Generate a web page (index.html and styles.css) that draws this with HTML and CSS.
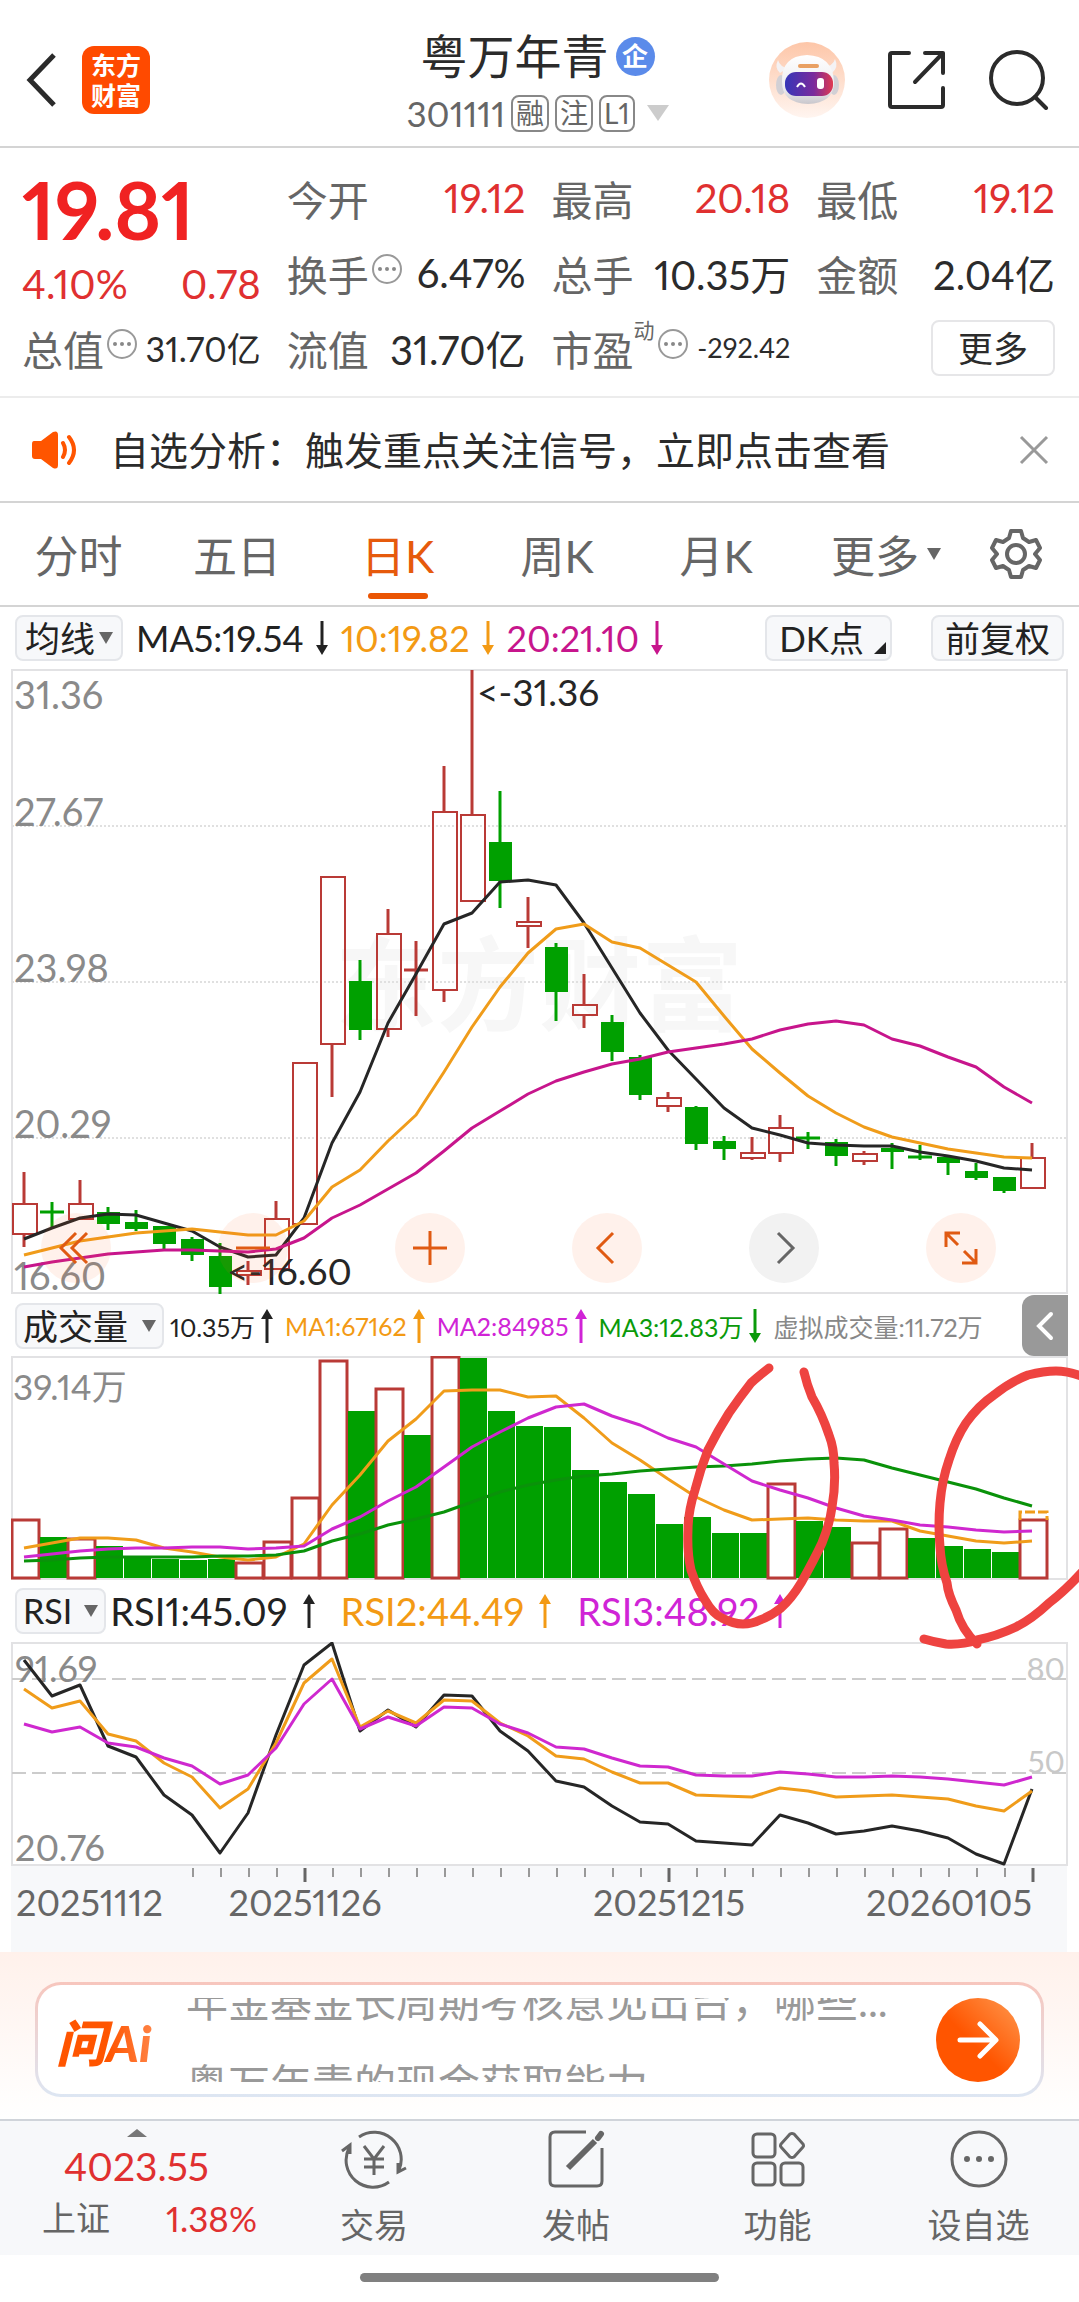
FILE: index.html
```html
<!DOCTYPE html>
<html lang="zh-CN">
<head>
    <meta charset="UTF-8">
    <meta name="viewport" content="width=device-width, initial-scale=1.0">
    <title>粤万年青 301111</title>
    <link rel="stylesheet" href="styles.css">
</head>
<body>

<header class="header">
    <div class="header-left">
        <button class="icon-btn" aria-label="返回">
            <svg width="32" height="56" viewBox="0 0 32 56"><path d="M28 3 L4 28 L28 53" fill="none" stroke="#2b2b2b" stroke-width="5"/></svg>
        </button>
        <a class="logo" href="#">东方<br>财富</a>
    </div>
    <div class="title">
        <h1>粤万年青<span class="badge">企</span></h1>
        <div class="code">
            <span>301111</span><span class="tag">融</span><span class="tag">注</span><span class="tag">L1</span>
            <svg width="22" height="16" viewBox="0 0 22 16"><path d="M0 0 H22 L11 16Z" fill="#ccc"/></svg>
        </div>
    </div>
    <div class="header-right">
        <button class="icon-btn" aria-label="助手">
            <svg width="76" height="76" viewBox="0 0 76 76">
                <defs>
                    <linearGradient id="halo" x1="0" y1="0" x2="0" y2="1"><stop offset="0" stop-color="#fdc6a8"/><stop offset="1" stop-color="#fff5f0"/></linearGradient>
                    <linearGradient id="face" x1="0" y1="0" x2="1" y2="0"><stop offset="0" stop-color="#3636b8"/><stop offset="0.6" stop-color="#7a2a9c"/><stop offset="1" stop-color="#e03a50"/></linearGradient>
                    <linearGradient id="shell" x1="0" y1="0" x2="0" y2="1"><stop offset="0" stop-color="#fff"/><stop offset="0.7" stop-color="#ecebee"/><stop offset="1" stop-color="#c9c7cc"/></linearGradient>
                </defs>
                <circle cx="38" cy="38" r="38" fill="url(#halo)"/>
                <path d="M9 18 q-4 8 2 13 l8 -5 q-8 -1 -10 -8z M66 17 q4 8 -3 14 l-8 -6 q9 -1 11 -8z" fill="#f4f2f4"/>
                <ellipse cx="12" cy="43" rx="5" ry="10" fill="#d2d0d5"/>
                <ellipse cx="65" cy="43" rx="5" ry="10" fill="#d2d0d5"/>
                <path d="M13 40 Q12 14 38 13 Q64 14 65 40 Q65 61 39 62 Q13 61 13 40Z" fill="url(#shell)"/>
                <rect x="29" y="22" width="21" height="4" rx="2" fill="#e9a063"/>
                <rect x="16" y="30" width="48" height="24" rx="11" fill="url(#face)"/>
                <path d="M28 45 q4 -7 8 0" fill="none" stroke="#fff" stroke-width="2"/>
                <rect x="48" y="36" width="7" height="11" rx="3" fill="#fff"/>
            </svg>
        </button>
        <button class="icon-btn" aria-label="分享">
            <svg width="60" height="60" viewBox="0 0 60 60"><path d="M22 3 H5 Q3 3 3 5 V55 Q3 57 5 57 H54 Q56 57 56 55 V38 M38 3 H56 V23 M56 3 L28 32" fill="none" stroke="#2b2b2b" stroke-width="4" stroke-linecap="round" stroke-linejoin="round"/></svg>
        </button>
        <button class="icon-btn" aria-label="搜索">
            <svg width="60" height="60" viewBox="0 0 60 60"><circle cx="28" cy="28" r="26" fill="none" stroke="#2b2b2b" stroke-width="4"/><path d="M46 47 L57 58" stroke="#2b2b2b" stroke-width="4" stroke-linecap="round"/></svg>
        </button>
    </div>
</header>

<section class="quote">
    <div class="price-block">
        <div class="price">19.81</div>
        <div class="change"><span>4.10%</span><span>0.78</span></div>
    </div>
    <div class="cell"><span class="label">今开</span><span class="value up">19.12</span></div>
    <div class="cell"><span class="label">最高</span><span class="value up">20.18</span></div>
    <div class="cell"><span class="label">最低</span><span class="value up">19.12</span></div>
    <div class="cell"><span class="label">换手<i class="info"></i></span><span class="value">6.47%</span></div>
    <div class="cell"><span class="label">总手</span><span class="value">10.35万</span></div>
    <div class="cell"><span class="label">金额</span><span class="value">2.04亿</span></div>
    <div class="cell"><span class="label">总值<i class="info"></i></span><span class="value medium">31.70亿</span></div>
    <div class="cell"><span class="label">流值</span><span class="value">31.70亿</span></div>
    <div class="cell"><span class="label">市盈<sup>动</sup><i class="info"></i></span><span class="value small">-292.42</span></div>
    <div class="cell end"><button class="more-btn">更多</button></div>
</section>

<section class="notice">
    <svg width="46" height="38" viewBox="0 0 46 38">
        <path d="M2 10 Q0 10 0 13 V25 Q0 28 3 28 H9 L21 37 Q26 39 26 34 V4 Q26 -1 21 1 L9 10Z" fill="#ff5500"/>
        <path d="M31 12 Q35 19 31 26 M37 6 Q47 19 37 32" fill="none" stroke="#ff5500" stroke-width="4" stroke-linecap="round"/>
    </svg>
    <a href="#">自选分析：触发重点关注信号，立即点击查看</a>
    <button class="icon-btn" aria-label="关闭">
        <svg width="30" height="30" viewBox="0 0 30 30"><path d="M2 2 L28 28 M28 2 L2 28" stroke="#999" stroke-width="3"/></svg>
    </button>
</section>

<nav class="tabs">
    <button>分时</button>
    <button>五日</button>
    <button class="active">日K</button>
    <button>周K</button>
    <button>月K</button>
    <button>更多<svg class="caret" width="14" height="12" viewBox="0 0 14 12"><path d="M0 0 H14 L7 12Z" fill="#666"/></svg></button>
    <button aria-label="设置">
        <svg width="52" height="52" viewBox="0 0 52 52" fill="none" stroke="#666" stroke-width="4" stroke-linejoin="round">
            <path d="M21 3 H31 L33 10 L39 14 L46 12 L50 20 L45 26 L50 32 L46 40 L39 38 L33 42 L31 49 H21 L19 42 L13 38 L6 40 L2 32 L7 26 L2 20 L6 12 L13 14 L19 10Z"/>
            <circle cx="26" cy="26" r="9"/>
        </svg>
    </button>
</nav>

<section class="indicator ma">
    <button class="chip tight">均线<svg width="14" height="12" viewBox="0 0 14 12"><path d="M0 0 H14 L7 12Z" fill="#666"/></svg></button>
    <span class="black">MA5:19.54<svg class="arrow"><use href="#down"/></svg></span>
    <span class="orange">10:19.82<svg class="arrow"><use href="#down"/></svg></span>
    <span class="pink">20:21.10<svg class="arrow"><use href="#down"/></svg></span>
    <button class="chip dk">DK点<svg width="12" height="12" viewBox="0 0 12 12"><path d="M12 0 V12 H0Z" fill="#222"/></svg></button>
    <button class="chip">前复权</button>
</section>

<section class="chart">
    <svg id="price-chart" viewBox="11 669 1057 626"></svg>
    <div class="chart-tools">
        <button aria-label="最左"><svg viewBox="0 0 40 40"><path d="M20 5 L5 20 L20 35 M31 5 L16 20 L31 35"/></svg></button>
        <button aria-label="缩小"><svg viewBox="0 0 40 40"><path d="M3 20 H37"/></svg></button>
        <button aria-label="放大"><svg viewBox="0 0 40 40"><path d="M3 20 H37 M20 3 V37"/></svg></button>
        <button aria-label="左移"><svg viewBox="0 0 40 40"><path d="M26 5 L11 20 L26 35"/></svg></button>
        <button class="disabled" aria-label="右移"><svg viewBox="0 0 40 40"><path d="M14 5 L29 20 L14 35"/></svg></button>
        <button aria-label="全屏"><svg viewBox="0 0 40 40"><path d="M5 19 V5 H19 M5 5 L17 17 M35 21 V35 H21 M35 35 L23 23"/></svg></button>
    </div>
</section>

<div class="sub-charts">
    <section class="indicator vol">
        <button class="chip wide">成交量<svg width="14" height="12" viewBox="0 0 14 12"><path d="M0 0 H14 L7 12Z" fill="#666"/></svg></button>
        <span class="black">10.35万<svg class="arrow"><use href="#up"/></svg></span>
        <span class="orange">MA1:67162<svg class="arrow"><use href="#up"/></svg></span>
        <span class="violet">MA2:84985<svg class="arrow"><use href="#up"/></svg></span>
        <span class="green">MA3:12.83万<svg class="arrow"><use href="#down"/></svg></span>
        <span class="grey">虚拟成交量:11.72万</span>
        <button class="toggle" aria-label="展开"><svg width="20" height="30" viewBox="0 0 20 30"><path d="M16 3 L4 15 L16 27" fill="none" stroke="#fff" stroke-width="4" stroke-linecap="round"/></svg></button>
    </section>
    <section class="chart">
        <svg id="volume-chart" viewBox="11 1356 1057 224"></svg>
    </section>
    <section class="indicator rsi">
        <button class="chip wide">RSI<svg width="14" height="12" viewBox="0 0 14 12"><path d="M0 0 H14 L7 12Z" fill="#666"/></svg></button>
        <span class="black">RSI1:45.09<svg class="arrow"><use href="#up"/></svg></span>
        <span class="orange">RSI2:44.49<svg class="arrow"><use href="#up"/></svg></span>
        <span class="violet">RSI3:48.92<svg class="arrow"><use href="#up"/></svg></span>
    </section>
    <section class="chart">
        <svg id="rsi-chart" viewBox="11 1642 1057 310"></svg>
    </section>
    <!-- hand-drawn marks over the two volume spikes -->
    <svg class="marks" viewBox="0 1295 1079 657">
        <path d="M769 1368 Q755 1379 751 1383 Q740 1397 729 1413 Q717 1432 708 1450 Q700 1470 695 1490 Q688 1512 688 1530 Q687 1552 691 1570 Q697 1588 705 1600 Q713 1614 722 1618 Q733 1624 743 1624 Q752 1624 760 1620 Q771 1616 781 1608 Q792 1598 801 1583 Q814 1560 822 1543 Q830 1523 832 1507 Q836 1484 834 1463 Q834 1448 829 1435 Q822 1414 812 1397 Q807 1385 804 1372"/>
        <path d="M977 1644 Q962 1630 956 1610 Q948 1594 947 1583 Q941 1565 940 1547 Q938 1525 940 1503 Q942 1480 949 1460 Q956 1438 966 1423 Q978 1406 994 1395 Q1010 1382 1028 1375 Q1044 1371 1056 1371 Q1068 1371 1084 1377"/>
        <path d="M1084 1570 Q1066 1590 1049 1603 Q1032 1619 1016 1627 Q997 1636 977 1640 Q962 1645 946 1644 Q934 1642 924 1639"/>
    </svg>
</div>

<section class="ask">
    <a class="ask-box" href="#">
        <span class="ask-logo">问Ai</span>
        <span class="ask-window">
            <span>年金基金长周期考核意见出台，哪些...</span>
            <span>粤万年青的现金获取能力</span>
        </span>
        <span class="ask-go">
            <svg width="42" height="42" viewBox="0 0 42 42"><path d="M3 21 H38 M23 5 L39 21 L23 37" fill="none" stroke="#fff" stroke-width="5" stroke-linecap="round" stroke-linejoin="round"/></svg>
        </span>
    </a>
</section>

<nav class="bottom-nav">
    <a class="index" href="#">
        <svg width="20" height="8" viewBox="0 0 20 8"><path d="M0 8 L10 0 L20 8Z" fill="#777"/></svg>
        <span class="index-value">4023.55</span>
        <span class="index-row"><span>上证</span><span class="index-pct">1.38%</span></span>
    </a>
    <a href="#">
        <svg width="66" height="60" viewBox="0 0 66 60">
            <path d="M18 8 A27 27 0 0 1 58 41 M57 34 V43 L65 39 M48 53 A27 27 0 0 1 8 19 M1 22 L9 16 V25"/>
            <path d="M23 17 L33 30 L43 17 M23 30 H43 M23 38 H43 M33 30 V46"/>
        </svg>
        交易
    </a>
    <a href="#">
        <svg width="60" height="60" viewBox="0 0 60 60">
            <path d="M40 3 H9 Q4 3 4 8 V52 Q4 57 9 57 H51 Q56 57 56 52 V19"/>
            <path d="M22 39 L49 12" stroke-width="6"/><path d="M52 9 L55 5" stroke-width="6" stroke-linecap="round"/>
        </svg>
        发帖
    </a>
    <a href="#">
        <svg width="60" height="60" viewBox="0 0 60 60">
            <rect x="5" y="5" width="22" height="23" rx="4"/><rect x="5" y="34" width="22" height="22" rx="4"/><rect x="33" y="34" width="22" height="22" rx="4"/>
            <path d="M42 5 L33 15 Q32 17 33 18 L42 28 Q44 29 46 28 L55 18 Q56 17 55 15 L46 5 Q44 4 42 5Z"/>
        </svg>
        功能
    </a>
    <a href="#">
        <svg width="60" height="60" viewBox="0 0 60 60">
            <circle cx="30" cy="30" r="27"/>
            <path d="M18 30 h0 M30 30 h0 M42 30 h0" stroke-width="6" stroke-linecap="round"/>
        </svg>
        设自选
    </a>
</nav>
<div class="home-bar"></div>

<svg class="symbols">
    <symbol id="down" viewBox="0 0 12 34"><path d="M6 0 V26" stroke="currentColor" stroke-width="3"/><path d="M0 24 H12 L6 34Z" fill="currentColor"/></symbol>
    <symbol id="up" viewBox="0 0 12 34"><path d="M6 34 V8" stroke="currentColor" stroke-width="3"/><path d="M0 10 H12 L6 0Z" fill="currentColor"/></symbol>
</svg>

<script src="chart.js"></script>
</body>
</html>
```
FILE: styles.css
```css
* {
    box-sizing: border-box;
}
body {
    margin: 0;
    background: #fff;
    color: #2b2b2b;
    font-family: Lato, "Noto Sans CJK SC", sans-serif;
    font-variant-numeric: proportional-nums;
}
button {
    font: inherit;
    font-variant-numeric: inherit;
    color: inherit;
    background: none;
    border: none;
    padding: 0;
    cursor: pointer;
}
a {
    color: inherit;
    text-decoration: none;
}
svg {
    display: block;
    flex: none;
}
.symbols {
    display: none;
}
.icon-btn {
    display: flex;
}

/* header */
.header {
    display: grid;
    grid-template-columns: 1fr auto 1fr;
    height: 148px;
    padding: 24px 30px 0 26px;
    border-bottom: 2px solid #d4d4d4;
}
.header-left, .header-right {
    display: flex;
    align-items: center;
    padding-bottom: 10px;
}
.header-left {
    gap: 24px;
}
.header-right {
    justify-content: flex-end;
    gap: 42px;
}
.logo {
    width: 68px;
    height: 68px;
    padding-top: 4px;
    border-radius: 12px;
    background: #ff4a00;
    color: #fff;
    font-size: 25px;
    font-weight: bold;
    line-height: 30px;
    text-align: center;
}
.title {
    display: flex;
    flex-direction: column;
    align-items: center;
}
.title h1 {
    display: flex;
    align-items: center;
    gap: 7px;
    margin: 0;
    font-size: 47px;
    font-weight: normal;
    line-height: 64px;
}
.badge {
    width: 39px;
    height: 39px;
    border-radius: 50%;
    background: #5b8bea;
    color: #fff;
    font-size: 26px;
    font-weight: bold;
    line-height: 38px;
    text-align: center;
}
.code {
    display: flex;
    align-items: center;
    gap: 6px;
    color: #666;
    font-size: 35px;
    line-height: 50px;
}
.code svg {
    margin-left: 6px;
}
.tag {
    height: 37px;
    padding: 0 3px;
    border: 2px solid #888;
    border-radius: 8px;
    font-size: 28px;
    line-height: 33px;
}

/* quote */
.quote {
    display: grid;
    grid-template-columns: repeat(4, 1fr);
    grid-auto-rows: 75px;
    column-gap: 26px;
    padding: 12px 24px 11px 22px;
    border-bottom: 2px solid #ececec;
    font-size: 41px;
}
.price-block {
    grid-row: span 2;
    color: #e03030;
}
.price {
    color: #f02222;
    font-size: 80px;
    font-weight: bold;
    line-height: 98px;
}
.change {
    display: flex;
    justify-content: space-between;
    font-size: 40px;
    line-height: 52px;
}
.cell {
    display: flex;
    align-items: center;
    justify-content: space-between;
    white-space: nowrap;
}
.cell.end {
    justify-content: flex-end;
}
.label {
    display: flex;
    align-items: center;
    color: #666;
}
.label sup {
    align-self: flex-start;
    font-size: 21px;
    line-height: 24px;
}
.value {
    font-size: 40px;
}
.value.medium {
    font-size: 34px;
}
.value.small {
    font-size: 27px;
}
.up {
    color: #e03030;
}
.info {
    display: block;
    position: relative;
    width: 30px;
    height: 30px;
    margin: 0 0 8px 3px;
    border: 2px solid #999;
    border-radius: 50%;
}
.info::before {
    content: "";
    position: absolute;
    top: 11px;
    left: 11px;
    width: 4px;
    height: 4px;
    border-radius: 50%;
    background: #888;
    box-shadow: -7px 0 #888, 7px 0 #888;
}
.more-btn {
    width: 124px;
    height: 56px;
    border: 2px solid #e6e6e8;
    border-radius: 8px;
    font-size: 35px;
    line-height: 48px;
}

/* notice */
.notice {
    display: flex;
    align-items: center;
    height: 105px;
    padding: 0 30px 0 32px;
    border-bottom: 2px solid #d4d4d4;
    font-size: 39px;
}
.notice a {
    flex: 1;
    margin-left: 32px;
    padding-bottom: 4px;
}

/* tabs */
.tabs {
    display: grid;
    grid-template-columns: 157fr 160fr 161fr 158fr 160fr 180fr 79fr;
    height: 104px;
    padding-right: 24px;
    border-bottom: 2px solid #d4d4d4;
    color: #666;
    font-size: 44px;
}
.tabs button {
    display: flex;
    align-items: center;
    justify-content: center;
    position: relative;
}
.tabs .active {
    color: #e65a0c;
}
.tabs .active::after {
    content: "";
    position: absolute;
    bottom: 6px;
    width: 60px;
    height: 6px;
    border-radius: 3px;
    background: #ea5504;
}
.caret {
    margin-left: 8px;
}

/* indicator rows */
.indicator {
    display: flex;
    align-items: center;
    padding: 0 15px;
    white-space: nowrap;
}
.indicator span {
    display: flex;
    align-items: center;
    gap: 12px;
}
.arrow {
    width: 12px;
    height: 34px;
}
.chip {
    display: flex;
    align-items: center;
    justify-content: center;
    height: 46px;
    padding: 0 12px;
    border: 2px solid #e4e6ea;
    border-radius: 8px;
    background: #f7f8fa;
    color: #222;
    font-size: 35px;
    line-height: 42px;
}
.chip.tight {
    gap: 4px;
    padding: 0 8px;
}
.chip.wide {
    gap: 14px;
    padding: 0 6px;
}
.ma {
    height: 62px;
    gap: 13px;
    font-size: 36px;
}
.dk {
    gap: 10px;
    margin: 0 26px 0 auto;
    padding-right: 4px;
}
.dk svg {
    margin-top: 20px;
}
.vol {
    height: 61px;
    gap: 12px;
    padding-right: 11px;
    font-size: 25px;
}
.vol span {
    gap: 6px;
}
.vol .chip {
    margin-right: -6px;
}
.rsi {
    height: 62px;
    gap: 26px;
    font-size: 38px;
}
.rsi span {
    gap: 15px;
}
.rsi .chip {
    gap: 12px;
    margin-right: -22px;
    font-size: 34px;
}
.toggle {
    display: flex;
    flex: none;
    align-items: center;
    justify-content: center;
    align-self: stretch;
    width: 46px;
    margin-left: auto;
    border-radius: 12px 0 0 12px;
    background: #999;
}
.black {
    color: #222;
}
.orange {
    color: #f39a14;
}
.pink {
    color: #c7158c;
}
.violet {
    color: #d024d6;
}
.green {
    color: #0a9a0a;
}
.grey {
    color: #888;
}

/* charts */
.chart {
    position: relative;
    padding: 0 11px;
}
.chart > svg {
    width: 100%;
}
.chart-tools {
    position: absolute;
    right: 83px;
    bottom: 12px;
    left: 41px;
    display: flex;
    justify-content: space-between;
}
.chart-tools button {
    display: flex;
    align-items: center;
    justify-content: center;
    width: 70px;
    height: 70px;
    border-radius: 50%;
    background: rgba(250, 100, 30, 0.09);
    color: #e05a12;
}
.chart-tools .disabled {
    background: #f2f2f2;
    color: #666;
}
.chart-tools svg {
    width: 40px;
    height: 40px;
    fill: none;
    stroke: currentColor;
    stroke-width: 3;
}
.sub-charts {
    position: relative;
}
.marks {
    position: absolute;
    inset: 0;
    width: 100%;
    pointer-events: none;
}
.marks path {
    fill: none;
    stroke: #ee4340;
    stroke-width: 9;
    stroke-linecap: round;
}

/* ask bar */
.ask {
    padding: 30px 35px 22px;
    background: linear-gradient(#fff1eb, #fff);
}
.ask-box {
    display: flex;
    align-items: center;
    height: 115px;
    padding: 0 21px 0 18px;
    border: 3px solid transparent;
    border-radius: 26px;
    background: linear-gradient(#fff, #fff) padding-box, linear-gradient(#f7c6bd, #dde6f3) border-box;
}
.ask-logo {
    width: 130px;
    background: linear-gradient(90deg, #ff5500 40%, #ff8a50 80%);
    -webkit-background-clip: text;
    background-clip: text;
    color: transparent;
    font-size: 50px;
    font-style: italic;
    font-weight: 900;
}
.ask-window {
    flex: 1;
    height: 84px;
    overflow: hidden;
    color: #999;
    font-size: 42px;
    line-height: 83px;
}
.ask-window span {
    display: block;
    white-space: nowrap;
}
.ask-window span:first-child {
    margin-top: -38px;
}
.ask-go {
    display: flex;
    align-items: center;
    justify-content: center;
    width: 84px;
    height: 84px;
    border-radius: 50%;
    background: linear-gradient(45deg, #ff5500 45%, #ff9a50);
}

/* bottom nav */
.bottom-nav {
    display: grid;
    grid-template-columns: 273fr 202fr 202fr 201fr 201fr;
    height: 136px;
    border-top: 2px solid #d0d4da;
    background: #f7f8fa;
    color: #666;
    font-size: 34px;
    line-height: 46px;
}
.bottom-nav a {
    display: flex;
    flex-direction: column;
    align-items: center;
    gap: 13px;
    padding-top: 8px;
}
.bottom-nav a > svg {
    fill: none;
    stroke: #666;
    stroke-width: 3;
}
.bottom-nav .index {
    gap: 6px;
}
.bottom-nav .index > svg {
    stroke: none;
}
.index-value {
    color: #e03030;
    font-size: 39px;
}
.index-row {
    display: flex;
    gap: 56px;
    padding-left: 26px;
}
.index-pct {
    color: #e03030;
    font-size: 35px;
}
.home-bar {
    width: 359px;
    height: 9px;
    margin: 18px auto 0;
    border-radius: 5px;
    background: #808080;
}
```
FILE: chart.js
```js
const RED = '#b93a36', GREEN = '#00a000', BLACK = '#262626', ORANGE = '#f09c1a';
const PINK = '#c7158c', VIOLET = '#cf28cf', LINE = '#e2e2e4';
const STEP = 28, FIRST = 24;
const x = i => FIRST + i * STEP;

// high, body top, body bottom, low, rising
const candles = [
    [1172,1204,1234,1247,1], [1202,1212,1212,1227,0], [1180,1204,1219,1220,1], [1207,1212,1224,1230,0],
    [1210,1222,1229,1231,0], [1226,1226,1244,1249,0], [1237,1239,1255,1261,0], [1243,1256,1287,1294,0],
    [1261,1271,1275,1285,1], [1201,1219,1269,1269,1], [1063,1063,1224,1224,1], [877,877,1044,1097,1],
    [960,981,1030,1040,0], [909,934,1029,1037,1], [941,970,970,1016,1], [766,812,990,1002,1],
    [670,815,901,901,1], [791,842,881,908,0], [897,922,926,948,1], [943,947,992,1021,0],
    [974,1005,1015,1028,1], [1015,1022,1052,1061,0], [1055,1057,1095,1100,0], [1092,1098,1106,1112,1],
    [1106,1107,1144,1150,0], [1136,1141,1149,1160,0], [1137,1153,1158,1160,1], [1115,1128,1153,1162,1],
    [1132,1138,1138,1149,0], [1139,1142,1156,1166,0], [1151,1154,1161,1165,1], [1143,1148,1152,1169,0],
    [1145,1157,1157,1160,0], [1157,1157,1163,1175,0], [1163,1171,1178,1180,0], [1177,1177,1191,1193,0],
    [1143,1158,1188,1188,1]
];
const ma5 = [1239,1228,1218,1214,1215,1223,1231,1247,1257,1255,1218,1143,1092,1023,974,924,913,882,880,885,923,968,1013,1050,1079,1108,1128,1135,1143,1145,1146,1146,1152,1156,1161,1168,1170];
const ma10 = [1255,1248,1241,1237,1233,1231,1229,1232,1235,1235,1221,1187,1170,1141,1115,1072,1027,987,953,929,924,942,948,965,982,1016,1049,1073,1096,1113,1127,1137,1143,1149,1153,1157,1158];
const ma20 = [1267,1262,1258,1254,1252,1250,1250,1251,1252,1249,1238,1218,1205,1189,1173,1151,1128,1111,1094,1081,1072,1064,1059,1052,1048,1044,1039,1030,1024,1021,1025,1039,1046,1057,1067,1087,1103];

const volumes = [1520,1537,1539,1546,1557,1559,1560,1559,1563,1542,1498,1361,1411,1389,1435,1357,1358,1411,1426,1427,1470,1482,1494,1524,1517,1533,1533,1484,1521,1527,1543,1529,1538,1546,1549,1552,1520];
const risingVolumes = [0, 2, 8, 9, 10, 11, 13, 15, 27, 30, 31, 36];
const vma1 = [1548,1543,1538,1538,1540,1548,1552,1557,1560,1557,1544,1505,1475,1441,1419,1391,1390,1390,1397,1396,1418,1443,1460,1479,1497,1510,1520,1519,1518,1520,1521,1521,1531,1536,1541,1543,1541];
const vma2 = [1557,1554,1551,1549,1548,1548,1547,1547,1549,1548,1546,1529,1517,1501,1487,1467,1447,1432,1418,1407,1404,1416,1425,1438,1447,1464,1481,1490,1498,1508,1516,1520,1525,1527,1530,1532,1531];
const vma3 = [1561,1560,1558,1557,1557,1557,1557,1556,1556,1555,1551,1541,1534,1525,1519,1512,1502,1492,1485,1480,1476,1474,1471,1469,1467,1466,1464,1461,1459,1458,1460,1468,1475,1482,1489,1498,1506];

const rsi1 = [1660,1696,1685,1746,1757,1795,1815,1853,1813,1735,1665,1643,1731,1710,1727,1695,1696,1731,1751,1781,1787,1806,1822,1824,1841,1843,1845,1815,1823,1834,1831,1826,1831,1838,1854,1864,1789];
const rsi2 = [1689,1708,1701,1734,1741,1763,1777,1808,1789,1743,1683,1659,1727,1711,1723,1700,1701,1723,1736,1756,1759,1772,1783,1783,1795,1796,1797,1788,1791,1797,1796,1795,1797,1799,1806,1811,1791];
const rsi3 = [1724,1732,1727,1743,1747,1758,1766,1784,1775,1748,1704,1679,1729,1717,1726,1707,1708,1724,1733,1747,1749,1758,1766,1767,1775,1776,1776,1772,1774,1777,1777,1776,1777,1779,1782,1785,1777];

function line(values, color, width = 3) {
    const points = values.map((v, i) => `${x(i)},${v}`).join(' ');
    return `<polyline points="${points}" fill="none" stroke="${color}" stroke-width="${width}" stroke-linejoin="round"/>`;
}

function seg(x1, y1, x2, y2, color, width = 2, dash = '') {
    return `<path d="M${x1} ${y1} L${x2} ${y2}" stroke="${color}" stroke-width="${width}" stroke-dasharray="${dash}"/>`;
}

function text(tx, ty, size, color, value, anchor = 'start') {
    return `<text x="${tx}" y="${ty}" font-size="${size}" fill="${color}" text-anchor="${anchor}">${value}</text>`;
}

function frame(top, bottom) {
    return `<rect x="12" y="${top}" width="1055" height="${bottom - top}" fill="none" stroke="${LINE}" stroke-width="2"/>`;
}

function drawPrice() {
    let out = `<text x="335" y="1023" font-size="102" font-weight="bold" fill="#f7f7f7">东方财富</text>`;
    out += frame(670, 1293);
    [826, 982, 1138].forEach(y => out += seg(12, y, 1067, y, '#e0e0e0', 2, '2 2'));
    [['31.36', 709], ['27.67', 826], ['23.98', 982], ['20.29', 1138], ['16.60', 1290]].forEach(([v, y]) => {
        out += text(14, y, 38, '#8a8a8a', v);
    });
    candles.forEach(([high, top, bottom, low, up], i) => {
        const color = up ? RED : GREEN;
        if (high < top) out += seg(x(i), high, x(i), top, color, 3);
        if (low > bottom) out += seg(x(i), bottom, x(i), low, color, 3);
        if (top === bottom) {
            out += seg(x(i) - 12, top, x(i) + 12, top, color, 3);
        } else if (up) {
            out += `<rect x="${x(i) - 11}" y="${top}" width="24" height="${bottom - top}" fill="none" stroke="${color}" stroke-width="2"/>`;
        } else {
            out += `<rect x="${x(i) - 11}" y="${top}" width="23" height="${bottom - top}" fill="${color}"/>`;
        }
    });
    out += line(ma5, BLACK) + line(ma10, ORANGE) + line(ma20, PINK);
    out += text(477, 706, 37, BLACK, '&lt;-31.36');
    out += text(227, 1285, 37, BLACK, '&lt;-16.60');
    document.getElementById('price-chart').innerHTML = out;
}

function drawVolume() {
    let out = frame(1357, 1579);
    out += text(13, 1400, 35, '#8a8a8a', '39.14万');
    volumes.forEach((top, i) => {
        if (risingVolumes.includes(i)) {
            out += `<rect x="${x(i) - 12}" y="${top}" width="27" height="${1578 - top}" fill="none" stroke="${RED}" stroke-width="3"/>`;
        } else {
            out += `<rect x="${x(i) - 12}" y="${top}" width="27" height="${1578 - top}" fill="${GREEN}"/>`;
        }
    });
    // projected volume of the current day
    out += `<path d="M1020 1520 V1512 H1047 V1520" fill="none" stroke="${ORANGE}" stroke-width="3" stroke-dasharray="10 3"/>`;
    out += line(vma1, ORANGE) + line(vma3, '#0a920a') + line(vma2, VIOLET);
    document.getElementById('volume-chart').innerHTML = out;
}

function drawRsi() {
    let out = `<rect x="11" y="1866" width="1056" height="86" fill="#f7f8fa"/>` + frame(1643, 1865);
    out += seg(12, 1679, 1067, 1679, '#ccc', 2, '14 6') + seg(12, 1773, 1067, 1773, '#ccc', 2, '14 6');
    out += text(15, 1682, 36, '#8a8a8a', '91.69') + text(15, 1861, 36, '#8a8a8a', '20.76');
    out += text(1065, 1680, 31, '#c8c8c8', '80', 'end') + text(1065, 1773, 31, '#c8c8c8', '50', 'end');
    out += line(rsi1, BLACK) + line(rsi2, ORANGE) + line(rsi3, VIOLET);
    for (let i = 6; i < candles.length; i++) {
        const major = i === 10 || i === 23 || i === 36;
        out += seg(x(i) + 1, 1868, x(i) + 1, major ? 1882 : 1877, major ? '#666' : '#999', major ? 3 : 2);
    }
    out += text(16, 1916, 36, '#666', '20251112') + text(305, 1916, 36, '#666', '20251126', 'middle');
    out += text(669, 1916, 36, '#666', '20251215', 'middle') + text(1032, 1916, 36, '#666', '20260105', 'end');
    document.getElementById('rsi-chart').innerHTML = out;
}

drawPrice();
drawVolume();
drawRsi();
```
